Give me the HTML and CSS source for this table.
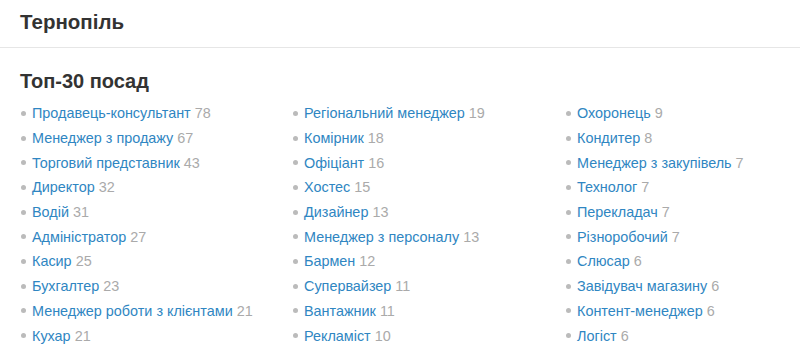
FILE: index.html
```html
<!DOCTYPE html>
<html lang="uk">
<head>
<meta charset="utf-8">
<link rel="stylesheet" href="styles.css">
</head>
<body>
<header class="top">
  <h1 class="city">Тернопіль</h1>
</header>
<section class="block">
  <h2 class="block-title">Топ-30 посад</h2>
  <div class="cols">
    <ul class="list">
      <li><a href="#">Продавець-консультант</a> <span class="n">78</span></li>
      <li><a href="#">Менеджер з продажу</a> <span class="n">67</span></li>
      <li><a href="#">Торговий представник</a> <span class="n">43</span></li>
      <li><a href="#">Директор</a> <span class="n">32</span></li>
      <li><a href="#">Водій</a> <span class="n">31</span></li>
      <li><a href="#">Адміністратор</a> <span class="n">27</span></li>
      <li><a href="#">Касир</a> <span class="n">25</span></li>
      <li><a href="#">Бухгалтер</a> <span class="n">23</span></li>
      <li><a href="#">Менеджер роботи з клієнтами</a> <span class="n">21</span></li>
      <li><a href="#">Кухар</a> <span class="n">21</span></li>
    </ul>
    <ul class="list">
      <li><a href="#">Регіональний менеджер</a> <span class="n">19</span></li>
      <li><a href="#">Комірник</a> <span class="n">18</span></li>
      <li><a href="#">Офіціант</a> <span class="n">16</span></li>
      <li><a href="#">Хостес</a> <span class="n">15</span></li>
      <li><a href="#">Дизайнер</a> <span class="n">13</span></li>
      <li><a href="#">Менеджер з персоналу</a> <span class="n">13</span></li>
      <li><a href="#">Бармен</a> <span class="n">12</span></li>
      <li><a href="#">Супервайзер</a> <span class="n">11</span></li>
      <li><a href="#">Вантажник</a> <span class="n">11</span></li>
      <li><a href="#">Рекламіст</a> <span class="n">10</span></li>
    </ul>
    <ul class="list">
      <li><a href="#">Охоронець</a> <span class="n">9</span></li>
      <li><a href="#">Кондитер</a> <span class="n">8</span></li>
      <li><a href="#">Менеджер з закупівель</a> <span class="n">7</span></li>
      <li><a href="#">Технолог</a> <span class="n">7</span></li>
      <li><a href="#">Перекладач</a> <span class="n">7</span></li>
      <li><a href="#">Різноробочий</a> <span class="n">7</span></li>
      <li><a href="#">Слюсар</a> <span class="n">6</span></li>
      <li><a href="#">Завідувач магазину</a> <span class="n">6</span></li>
      <li><a href="#">Контент-менеджер</a> <span class="n">6</span></li>
      <li><a href="#">Логіст</a> <span class="n">6</span></li>
    </ul>
  </div>
</section>
</body>
</html>
```
FILE: styles.css
```css
html, body {
  margin: 0;
  padding: 0;
  background: #fff;
  font-family: "Liberation Sans", Arial, sans-serif;
  color: #333;
}
.top {
  height: 47px;
  border-bottom: 1px solid #e6e6e6;
  padding: 0 20px;
  display: flex;
  align-items: center;
}
.city {
  margin: 0;
  font-size: 20.5px;
  font-weight: bold;
  color: #333;
  line-height: 1;
  padding-bottom: 3px;
}
.block {
  padding: 21px 20px 0;
}
.block-title {
  margin: 0 0 8px;
  font-size: 20px;
  font-weight: bold;
  color: #333;
  line-height: 24px;
}
.cols {
  display: grid;
  grid-template-columns: 272px 273px 1fr;
}
.list {
  list-style: none;
  margin: 0;
  padding: 0;
}
.list li {
  display: flex;
  align-items: center;
  height: 24.7px;
  font-size: 14.4px;
  white-space: nowrap;
}
.list li::before {
  content: "";
  width: 5px;
  height: 5px;
  border-radius: 50%;
  background: #bbb;
  margin: 0 6px 0 1px;
  flex: none;
}
.list a {
  color: #2f86c2;
  text-decoration: none;
}
.n {
  color: #aaa;
  margin-left: 4px;
}
```
